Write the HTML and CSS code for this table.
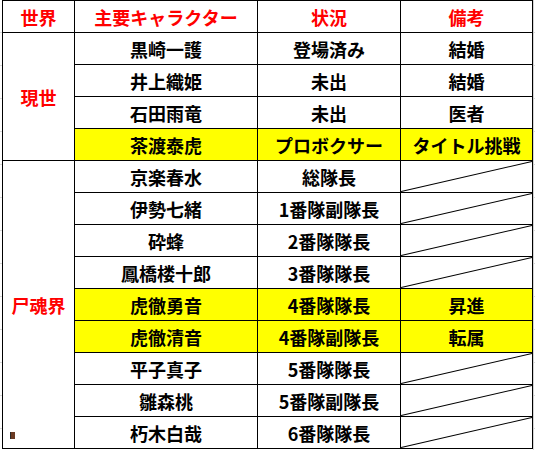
FILE: index.html
```html
<!DOCTYPE html>
<html lang="ja">
<head>
<meta charset="utf-8">
<link rel="stylesheet" href="styles.css">
</head>
<body>
<div class="sheet">
<table class="grid">
  <colgroup>
    <col class="c1"><col class="c2"><col class="c3"><col class="c4">
  </colgroup>
  <thead>
    <tr class="head"><th>世界</th><th>主要キャラクター</th><th>状況</th><th>備考</th></tr>
  </thead>
  <tbody>
    <tr><td class="world" rowspan="4">現世</td><td>黒崎一護</td><td>登場済み</td><td>結婚</td></tr>
    <tr><td>井上織姫</td><td>未出</td><td>結婚</td></tr>
    <tr><td>石田雨竜</td><td>未出</td><td>医者</td></tr>
    <tr class="hl"><td>茶渡泰虎</td><td>プロボクサー</td><td>タイトル挑戦</td></tr>
    <tr><td class="world" rowspan="9"><span class="w2">尸魂界</span><span class="pic"></span></td><td>京楽春水</td><td>総隊長</td><td class="slash"><svg class="diag" viewBox="0 0 131 31" preserveAspectRatio="none"><line x1="0" y1="30.5" x2="131" y2="0.5"/></svg></td></tr>
    <tr><td>伊勢七緒</td><td>1番隊副隊長</td><td class="slash"><svg class="diag" viewBox="0 0 131 31" preserveAspectRatio="none"><line x1="0" y1="30.5" x2="131" y2="0.5"/></svg></td></tr>
    <tr><td>砕蜂</td><td>2番隊隊長</td><td class="slash"><svg class="diag" viewBox="0 0 131 31" preserveAspectRatio="none"><line x1="0" y1="30.5" x2="131" y2="0.5"/></svg></td></tr>
    <tr><td>鳳橋楼十郎</td><td>3番隊隊長</td><td class="slash"><svg class="diag" viewBox="0 0 131 31" preserveAspectRatio="none"><line x1="0" y1="30.5" x2="131" y2="0.5"/></svg></td></tr>
    <tr class="hl"><td>虎徹勇音</td><td>4番隊隊長</td><td>昇進</td></tr>
    <tr class="hl"><td>虎徹清音</td><td>4番隊副隊長</td><td>転属</td></tr>
    <tr><td>平子真子</td><td>5番隊隊長</td><td class="slash"><svg class="diag" viewBox="0 0 131 31" preserveAspectRatio="none"><line x1="0" y1="30.5" x2="131" y2="0.5"/></svg></td></tr>
    <tr><td>雛森桃</td><td>5番隊副隊長</td><td class="slash"><svg class="diag" viewBox="0 0 131 31" preserveAspectRatio="none"><line x1="0" y1="30.5" x2="131" y2="0.5"/></svg></td></tr>
    <tr><td>朽木白哉</td><td>6番隊隊長</td><td class="slash"><svg class="diag" viewBox="0 0 131 31" preserveAspectRatio="none"><line x1="0" y1="30.5" x2="131" y2="0.5"/></svg></td></tr>
  </tbody>
</table>
</div>
</body>
</html>
```

FILE: styles.css
```css
html, body {
  margin: 0;
  padding: 0;
}
body {
  width: 535px;
  height: 450px;
  overflow: hidden;
  background-color: #fff;
  background-image:
    linear-gradient(to right, transparent 533px, #d4d4d4 533px, #d4d4d4 534px, transparent 534px),
    repeating-linear-gradient(to bottom, transparent 0, transparent 32px, #d9d9d9 32px, #d9d9d9 33px);
  font-family: "Noto Sans CJK JP", "Noto Sans", sans-serif;
}
.sheet {
  padding: 0 0 0 2px;
}
.grid {
  border-collapse: collapse;
  table-layout: fixed;
  width: 530px;
  background: #fff;
}
.c1 { width: 72px; }
.c2 { width: 183px; }
.c3 { width: 143px; }
.c4 { width: 132px; }
.grid th, .grid td {
  border: 1px solid #000;
  height: 31px;
  padding: 0;
  text-align: center;
  vertical-align: middle;
  font-size: 18px;
  font-weight: 700;
  line-height: 20px;
  color: #000;
  white-space: nowrap;
}
.grid th {
  color: #ff0000;
}
.grid .world {
  color: #ff0000;
  position: relative;
}
.hl td {
  background: #ffff00;
}
.diag {
  display: block;
  width: 100%;
  height: 31px;
}
.diag line {
  stroke: #000;
  stroke-width: 1.1;
  vector-effect: non-scaling-stroke;
}
.pic {
  position: absolute;
  left: 7px;
  bottom: 9px;
  width: 4px;
  height: 7px;
  background: #6a3a22;
  border-left: 1px solid #2a2a2a;
}
```
